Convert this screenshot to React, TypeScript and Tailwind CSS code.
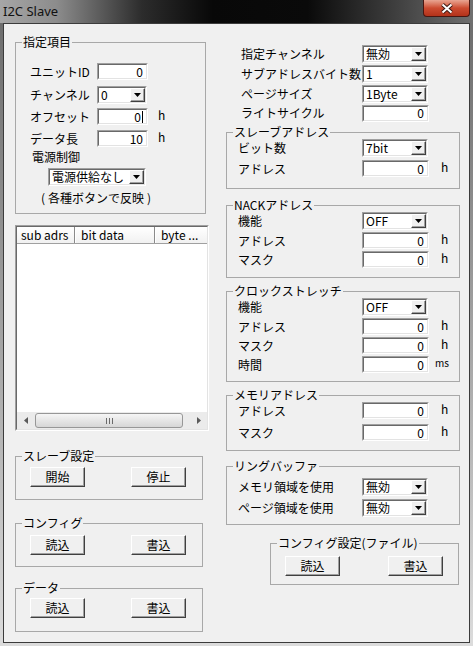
import React from "react";

const SUNK_OUT = "border border-t-[#a0a0a0] border-l-[#a0a0a0] border-b-white border-r-white";
const SUNK_IN = "border border-t-[#696969] border-l-[#696969] border-b-[#e3e3e3] border-r-[#e3e3e3]";
const RAISED = "border border-t-white border-l-white border-b-[#404040] border-r-[#404040] shadow-[inset_-1px_-1px_0_#a0a0a0]";

function TextBox({ w, value = "0", caret = false }: { w: string; value?: string; caret?: boolean }) {
  return (
    <div className={`${w} h-[17px] shrink-0 ${SUNK_OUT}`}>
      <div className={`h-full ${SUNK_IN} bg-white flex items-center justify-end pr-[3px]`}>
        <span>{value}</span>
        {caret && <span className="w-[1px] h-[12px] bg-black ml-[1px]" />}
      </div>
    </div>
  );
}

function Combo({ w, value }: { w: string; value: string }) {
  return (
    <div className={`${w} h-[18px] shrink-0 ${SUNK_OUT}`}>
      <div className={`h-full ${SUNK_IN} bg-white flex`}>
        <div className="flex-1 flex items-center pl-[2px] whitespace-nowrap">{value}</div>
        <div className={`w-[15px] h-full bg-[#f0f0f0] ${RAISED} flex items-center justify-center`}>
          <svg width="7" height="4" viewBox="0 0 7 4">
            <path d="M0 0H7L3.5 4Z" fill="#000" />
          </svg>
        </div>
      </div>
    </div>
  );
}

function Btn({ label }: { label: string }) {
  return (
    <div className={`w-[55px] h-[20px] shrink-0 bg-[#f0f0f0] ${RAISED} flex items-center justify-center`}>
      {label}
    </div>
  );
}

function Group({ title, cls, children }: { title: React.ReactNode; cls: string; children?: React.ReactNode }) {
  return (
    <fieldset className={`border border-[#a8a8a8] shrink-0 ${cls}`}>
      <legend className="ml-[6px] px-[1px] leading-[14px] whitespace-nowrap">{title}</legend>
      {children}
    </fieldset>
  );
}

function Unit({ text }: { text: string }) {
  return <span className="ml-[12px] -mt-[4px] leading-[12px]">{text}</span>;
}

function LeftCol() {
  return (
    <div className="ml-[11px] pt-[11px] w-[194px] shrink-0 flex flex-col">
      <Group title="指定項目" cls="w-[191px] h-[179px]">
        <div className="flex flex-col pl-[14px]">
          <div className="mt-[14px] h-[17px] flex items-center">
            <span className="w-[67px] shrink-0">ユニットID</span>
            <TextBox w="w-[51px]" />
          </div>
          <div className="mt-[6px] h-[18px] flex items-center">
            <span className="w-[67px] shrink-0">チャンネル</span>
            <Combo w="w-[50px]" value="0" />
          </div>
          <div className="mt-[4px] h-[17px] flex items-center">
            <span className="w-[67px] shrink-0">オフセット</span>
            <TextBox w="w-[51px]" caret />
            <span className="ml-[10px] -mt-[4px]">h</span>
          </div>
          <div className="mt-[5px] h-[17px] flex items-center">
            <span className="w-[67px] shrink-0">データ長</span>
            <TextBox w="w-[51px]" value="10" />
            <span className="ml-[10px] -mt-[4px]">h</span>
          </div>
          <div className="mt-[3px] ml-[2px]">電源制御</div>
          <div className="mt-[4px] ml-[18px] flex">
            <Combo w="w-[98px]" value="電源供給なし" />
          </div>
          <div className="mt-[5px] ml-[11px] whitespace-nowrap flex">
            <span>(</span>
            <span className="mx-[3px]">各種ボタンで反映</span>
            <span>)</span>
          </div>
        </div>
      </Group>

      <div className={`mt-[11px] w-[194px] h-[206px] shrink-0 ${SUNK_OUT}`}>
        <div className={`h-full ${SUNK_IN} bg-white flex flex-col`}>
          <div className="h-[17px] shrink-0 flex bg-linear-to-b from-white to-[#f1f1f1] border-b border-b-[#a0a0a0]">
            <div className="w-[58px] shrink-0 pl-[4px] flex items-center border-r border-r-[#8a8a8a] whitespace-nowrap">sub adrs</div>
            <div className="w-[80px] shrink-0 pl-[5px] flex items-center border-l border-l-white border-r border-r-[#8a8a8a] whitespace-nowrap">bit data</div>
            <div className="flex-1 pl-[5px] flex items-center border-l border-l-white whitespace-nowrap">byte ...</div>
          </div>
          <div className="flex-1" />
          <div className="h-[17px] shrink-0 flex items-center bg-[#ebebeb]">
            <div className="w-[17px] h-full flex items-center justify-center">
              <svg width="4" height="7" viewBox="0 0 4 7">
                <path d="M4 0V7L0 3.5Z" fill="#5a5a5a" />
              </svg>
            </div>
            <div className="ml-[1px] w-[148px] h-[15px] rounded-[3px] border border-[#979797] bg-linear-to-b from-[#f6f6f6] to-[#d6d6d6] flex items-center justify-center gap-[2px]">
              <span className="w-[1px] h-[6px] bg-[#6a6a6a]" />
              <span className="w-[1px] h-[6px] bg-[#6a6a6a]" />
              <span className="w-[1px] h-[6px] bg-[#6a6a6a]" />
            </div>
            <div className="flex-1" />
            <div className="w-[17px] h-full flex items-center justify-center">
              <svg width="4" height="7" viewBox="0 0 4 7">
                <path d="M0 0V7L4 3.5Z" fill="#5a5a5a" />
              </svg>
            </div>
          </div>
        </div>
      </div>

      <Group title="スレーブ設定" cls="mt-[18px] w-[188px] h-[51px]">
        <div className="mt-[4px] pl-[14px] flex gap-[46px]">
          <Btn label="開始" />
          <Btn label="停止" />
        </div>
      </Group>
      <Group title="コンフィグ" cls="mt-[16px] w-[188px] h-[51px]">
        <div className="mt-[5px] pl-[14px] flex gap-[46px]">
          <Btn label="読込" />
          <Btn label="書込" />
        </div>
      </Group>
      <Group title="データ" cls="mt-[14px] w-[188px] h-[51px]">
        <div className="mt-[3px] pl-[14px] flex gap-[46px]">
          <Btn label="読込" />
          <Btn label="書込" />
        </div>
      </Group>
    </div>
  );
}

function GRow({ label, children, cls = "" }: { label: string; children: React.ReactNode; cls?: string }) {
  return (
    <div className={`flex items-center ${cls}`}>
      <span className="w-[124px] shrink-0 whitespace-nowrap">{label}</span>
      {children}
    </div>
  );
}

function RightCol() {
  return (
    <div className="ml-[17px] pt-[20px] w-[234px] shrink-0 flex flex-col">
      <div className="flex flex-col pl-[15px]">
        <div className="h-[20px] flex items-center">
          <span className="w-[121px] shrink-0 whitespace-nowrap">指定チャンネル</span>
          <Combo w="w-[66px]" value="無効" />
        </div>
        <div className="h-[20px] flex items-center">
          <span className="w-[121px] shrink-0 whitespace-nowrap">サブアドレスバイト数</span>
          <Combo w="w-[66px]" value="1" />
        </div>
        <div className="h-[20px] flex items-center">
          <span className="w-[121px] shrink-0 whitespace-nowrap">ページサイズ</span>
          <Combo w="w-[66px]" value="1Byte" />
        </div>
        <div className="h-[18px] flex items-center">
          <span className="w-[121px] shrink-0 whitespace-nowrap">ライトサイクル</span>
          <TextBox w="w-[67px]" />
        </div>
      </div>

      <Group title="スレーブアドレス" cls="mt-[3px] w-[234px] h-[64px]">
        <div className="flex flex-col pl-[11px]">
          <GRow label="ビット数"><Combo w="w-[66px]" value="7bit" /></GRow>
          <GRow label="アドレス" cls="mt-[3px]"><TextBox w="w-[67px]" /><Unit text="h" /></GRow>
        </div>
      </Group>

      <Group title="NACKアドレス" cls="mt-[9px] w-[234px] h-[80px]">
        <div className="flex flex-col pl-[11px]">
          <GRow label="機能"><Combo w="w-[66px]" value="OFF" /></GRow>
          <GRow label="アドレス" cls="mt-[2px]"><TextBox w="w-[67px]" /><Unit text="h" /></GRow>
          <GRow label="マスク" cls="mt-[2px]"><TextBox w="w-[67px]" /><Unit text="h" /></GRow>
        </div>
      </Group>

      <Group title="クロックストレッチ" cls="mt-[6px] w-[234px] h-[98px]">
        <div className="flex flex-col pl-[11px]">
          <GRow label="機能"><Combo w="w-[66px]" value="OFF" /></GRow>
          <GRow label="アドレス" cls="mt-[2px]"><TextBox w="w-[67px]" /><Unit text="h" /></GRow>
          <GRow label="マスク" cls="mt-[2px]"><TextBox w="w-[67px]" /><Unit text="h" /></GRow>
          <GRow label="時間" cls="mt-[2px]">
            <TextBox w="w-[67px]" />
            <span className="ml-[6px] -mt-[4px] text-[10px] leading-[12px]">ms</span>
          </GRow>
        </div>
      </Group>

      <Group title="メモリアドレス" cls="mt-[6px] w-[234px] h-[63px]">
        <div className="flex flex-col pl-[11px]">
          <GRow label="アドレス"><TextBox w="w-[67px]" /><Unit text="h" /></GRow>
          <GRow label="マスク" cls="mt-[5px]"><TextBox w="w-[67px]" /><Unit text="h" /></GRow>
        </div>
      </Group>

      <Group title="リングバッファ" cls="mt-[8px] w-[234px] h-[66px]">
        <div className="flex flex-col pl-[11px]">
          <GRow label="メモリ領域を使用" cls="mt-[5px]"><Combo w="w-[66px]" value="無効" /></GRow>
          <GRow label="ページ領域を使用" cls="mt-[3px]"><Combo w="w-[66px]" value="無効" /></GRow>
        </div>
      </Group>

      <Group title="コンフィグ設定(ファイル)" cls="mt-[11px] ml-[44px] w-[189px] h-[49px]">
        <div className="mt-[6px] pl-[14px] flex gap-[48px]">
          <Btn label="読込" />
          <Btn label="書込" />
        </div>
      </Group>
    </div>
  );
}

export default function App() {
  return (
    <div className="w-[473px] h-[646px] overflow-hidden flex flex-col bg-linear-to-b from-[#6a6a6a] to-[#dcdcdc] font-['Noto_Sans_CJK_JP',sans-serif] text-[12px] leading-[14px] text-black">
      <div className="h-[23px] shrink-0 flex items-start justify-between bg-[linear-gradient(90deg,#a6a6a6_0%,#8c8c8c_12%,#2c2c2c_30%,#080808_45%,#0a0a0a_65%,#3a3a3a_82%,#707070_100%)]">
        <div className="pl-[3px] pt-[4px] font-['Noto_Sans',sans-serif] text-[13px] leading-[15px] text-[#111]">I2C Slave</div>
        <div className="mr-[3px] w-[47px] h-[17px] rounded-b-[4px] border border-t-0 border-[#4a1610] bg-linear-to-b from-[#e8a592] via-[#cc4b30] to-[#b3321a] flex items-center justify-center">
          <svg width="14" height="11" viewBox="0 0 14 11">
            <path d="M2.5 1.5L11.5 9.5M11.5 1.5L2.5 9.5" stroke="#3d1a14" strokeWidth="4" />
            <path d="M2.5 1.5L11.5 9.5M11.5 1.5L2.5 9.5" stroke="#ffffff" strokeWidth="2" />
          </svg>
        </div>
      </div>
      <div className="ml-[3px] w-[467px] h-[620px] shrink-0 border border-[#3c3c3c] bg-[#f0f0f0] flex">
        <LeftCol />
        <RightCol />
      </div>
    </div>
  );
}
